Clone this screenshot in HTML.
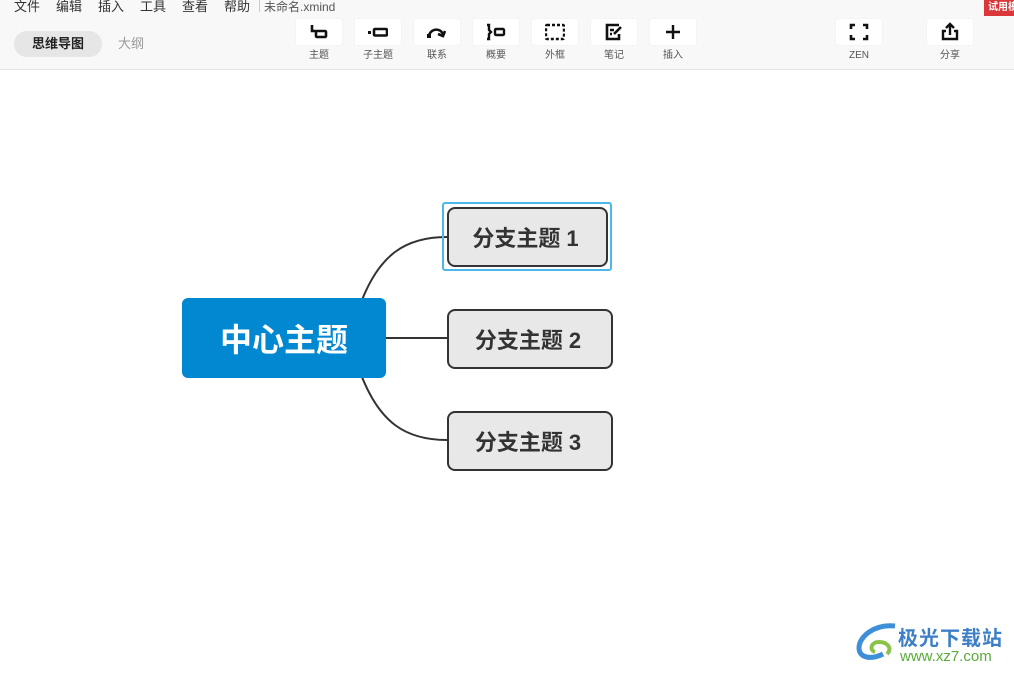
<!DOCTYPE html>
<html><head><meta charset="utf-8"><style>
*{margin:0;padding:0;box-sizing:border-box}
body{width:1014px;height:673px;background:#fff;position:relative;overflow:hidden;font-family:"Liberation Sans","Noto Sans CJK SC",sans-serif;}
.top{position:absolute;left:0;top:0;width:1014px;height:70px;background:#f8f8f8;border-bottom:1px solid #e4e4e4}
.menu{position:absolute;top:-3px;font-size:13px;color:#333;line-height:20px}
.tab{position:absolute;top:31px;height:26px;line-height:26px;font-size:13px}
.btn{position:absolute;top:19px;width:46px;height:26px;background:#fff;border-radius:2px;box-shadow:0 0 1px #ddd}
.btn svg{position:absolute;left:13px;top:3px}
.lbl{position:absolute;top:49px;font-size:10px;line-height:14px;color:#555;width:60px;text-align:center}
.b{position:absolute;background:#e8e8e8;border:2px solid #333;border-radius:8px;font-weight:bold;font-size:22px;color:#333;display:flex;align-items:center;justify-content:center;padding-right:4px}
</style></head><body>
<div class="top">
<div class="menu" style="left:14px">文件</div>
<div class="menu" style="left:56px">编辑</div>
<div class="menu" style="left:98px">插入</div>
<div class="menu" style="left:140px">工具</div>
<div class="menu" style="left:182px">查看</div>
<div class="menu" style="left:224px">帮助</div>
<div style="position:absolute;left:259px;top:0;width:1px;height:12px;background:#ccc"></div>
<div class="menu" style="left:264px;color:#555;font-size:12px">未命名.xmind</div>
<div style="position:absolute;left:984px;top:0;width:30px;height:16px;background:#d9373a;color:#fff;font-size:10px;font-weight:bold;line-height:16px;padding-left:4px;overflow:hidden;white-space:nowrap">试用模</div>
<div class="tab" style="left:14px;width:88px;background:#e6e6e6;border-radius:13px;text-align:center;font-weight:bold;color:#222">思维导图</div>
<div class="tab" style="left:118px;color:#999">大纲</div>

<div class="btn" style="left:296px"><svg width="20" height="20" viewBox="0 0 20 20" fill="none" stroke="#111" stroke-width="2.6"><path d="M3 3v6h4"/><rect x="7" y="9" width="10" height="6" rx="1"/></svg></div>
<div class="btn" style="left:355px"><svg width="20" height="20" viewBox="0 0 20 20" fill="none" stroke="#111" stroke-width="2.6"><rect x="0" y="9" width="3" height="3" fill="#111" stroke="none"/><rect x="6" y="7" width="13" height="6.5" rx="1"/></svg></div>
<div class="btn" style="left:414px"><svg width="20" height="20" viewBox="0 0 20 20" fill="none" stroke="#111" stroke-width="2.6"><path d="M2 13c3-7 11-7 14-1"/><path d="M11 12l5 2 2-5"/><rect x="0" y="12" width="4" height="4" fill="#111" stroke="none"/></svg></div>
<div class="btn" style="left:473px"><svg width="20" height="20" viewBox="0 0 20 20" fill="none" stroke="#111" stroke-width="2.4"><path d="M1 3h2v5l2 2-2 2v5H1"/><rect x="9" y="7" width="9" height="6" rx="1"/></svg></div>
<div class="btn" style="left:532px"><svg width="20" height="20" viewBox="0 0 20 20" fill="none" stroke="#111" stroke-width="2.4" stroke-dasharray="3 2"><rect x="1" y="3" width="18" height="14" rx="1"/></svg></div>
<div class="btn" style="left:591px"><svg width="20" height="20" viewBox="0 0 20 20" fill="none" stroke="#111" stroke-width="2.6"><path d="M15 3H3v14h12v-5M6 8h4M6 12h2M10 12l7-7"/></svg></div>
<div class="btn" style="left:650px"><svg width="20" height="20" viewBox="0 0 20 20" fill="none" stroke="#111" stroke-width="2.4"><path d="M10 3v14M3 10h14"/></svg></div>
<div class="btn" style="left:836px"><svg width="20" height="20" viewBox="0 0 20 20" fill="none" stroke="#111" stroke-width="2.6"><path d="M2 7V3h4M14 3h4v4M18 13v4h-4M6 17H2v-4"/></svg></div>
<div class="btn" style="left:927px"><svg width="20" height="20" viewBox="0 0 20 20" fill="none" stroke="#111" stroke-width="2.4"><path d="M6 9H3v8h14V9h-3M10 13V2M6 6l4-4 4 4"/></svg></div>

<div class="lbl" style="left:289px">主题</div>
<div class="lbl" style="left:348px">子主题</div>
<div class="lbl" style="left:407px">联系</div>
<div class="lbl" style="left:466px">概要</div>
<div class="lbl" style="left:525px">外框</div>
<div class="lbl" style="left:584px">笔记</div>
<div class="lbl" style="left:643px">插入</div>
<div class="lbl" style="left:829px">ZEN</div>
<div class="lbl" style="left:920px">分享</div>
</div>

<svg style="position:absolute;left:0;top:0" width="1014" height="673" fill="none" stroke="#333" stroke-width="2">
<path d="M362 300C380 255 405 237 447 237"/>
<path d="M386 338H447"/>
<path d="M362 377C380 422 405 440 447 440"/>
</svg>
<div style="position:absolute;left:182px;top:298px;width:204px;height:80px;background:#0288d1;border-radius:6px;color:#fff;font-weight:bold;font-size:32px;display:flex;align-items:center;justify-content:center">中心主题</div>
<div style="position:absolute;left:442px;top:202px;width:170px;height:69px;border:2px solid #4cb8ea;border-radius:3px"></div>
<div class="b" style="left:447px;top:207px;width:161px;height:60px">分支主题 1</div>
<div class="b" style="left:447px;top:309px;width:166px;height:60px">分支主题 2</div>
<div class="b" style="left:447px;top:411px;width:166px;height:60px">分支主题 3</div>

<svg style="position:absolute;left:855px;top:622px" width="45" height="42" viewBox="0 0 45 42" fill="none">
<path d="M40 4C20 2 4 14 4 26c0 10 12 12 24 6" stroke="#3d8fd8" stroke-width="5"/>
<path d="M20 30c-6-2-4-10 4-10 8 0 14 6 8 12" stroke="#8bc34a" stroke-width="4"/>
</svg>
<div style="position:absolute;left:898px;top:622px;font-size:20px;font-weight:bold;color:#3d7fc7;letter-spacing:1px">极光下载站</div>
<div style="position:absolute;left:900px;top:648px;font-size:15px;color:#5aab3a">www.xz7.com</div>
</body></html>
